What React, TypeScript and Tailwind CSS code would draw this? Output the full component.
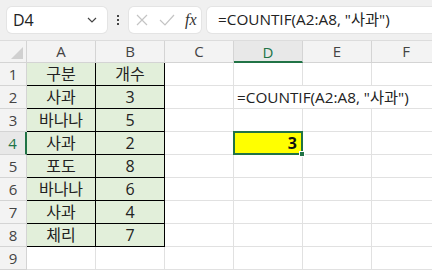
import React from "react";

const font = { fontFamily: '"Open Sans", "Noto Sans CJK KR", sans-serif' };

const cols = ["A", "B", "C", "D", "E", "F"];
const table: [string, string][] = [
  ["구분", "개수"],
  ["사과", "3"],
  ["바나나", "5"],
  ["사과", "2"],
  ["포도", "8"],
  ["바나나", "6"],
  ["사과", "4"],
  ["체리", "7"],
];

function Chevron() {
  return (
    <svg width="12" height="8" viewBox="0 0 12 8" className="text-[#444]">
      <path d="M2 2 L6 6 L10 2" fill="none" stroke="currentColor" strokeWidth="1.2" />
    </svg>
  );
}

function FormulaBar() {
  return (
    <div className="flex h-[41px] items-center gap-0 border-b border-[#dcdcdc] bg-[#f0f0f0]">
      <div className="ml-[7px] flex h-[26px] w-[100px] items-center justify-between rounded-[5px] bg-white pl-[6px] pr-[9px] shadow-[0_0_0_1px_#e4e4e4]">
        <span className="text-[16px] leading-none text-[#222]">D4</span>
        <Chevron />
      </div>
      <div className="flex w-[22px] flex-col items-center gap-[2px]">
        <span className="h-[2px] w-[2px] bg-[#444]" />
        <span className="h-[2px] w-[2px] bg-[#444]" />
        <span className="h-[2px] w-[2px] bg-[#444]" />
      </div>
      <div className="flex h-[26px] w-[72px] items-center rounded-[5px] bg-white pl-[6px] shadow-[0_0_0_1px_#e4e4e4]">
        <svg width="14" height="14" viewBox="0 0 14 14">
          <path d="M2 2 L12 12 M12 2 L2 12" stroke="#c4c4c4" strokeWidth="1.2" />
        </svg>
        <svg width="16" height="14" viewBox="0 0 16 14" className="ml-[10px]">
          <path d="M1 7 L6 12 L15 2" fill="none" stroke="#c4c4c4" strokeWidth="1.2" />
        </svg>
        <span
          className="ml-[10px] text-[16px] italic leading-none text-[#333]"
          style={{ fontFamily: '"Liberation Serif", serif' }}
        >
          fx
        </span>
      </div>
      <div className="ml-[6px] flex h-[26px] flex-1 items-center rounded-l-[5px] bg-white pl-[11px] shadow-[0_0_0_1px_#e4e4e4]">
        <span className="whitespace-nowrap text-[15.3px] leading-none text-[#222]">
          =COUNTIF(A2:A8, "사과")
        </span>
      </div>
    </div>
  );
}

export default function App() {
  return (
    <div className="h-[271px] w-[432px] overflow-hidden bg-white" style={font}>
      <FormulaBar />
      <div className="grid grid-cols-[27px_repeat(6,69px)] grid-rows-[22px_repeat(9,23px)]">
        {/* select-all corner */}
        <div className="relative border-b border-r border-[#d4d4d4] bg-[#f3f3f3]">
          <svg width="12" height="12" viewBox="0 0 12 12" className="absolute bottom-[3px] right-[3px]">
            <path d="M12 0 L12 12 L0 12 Z" fill="#d0d0d0" />
          </svg>
        </div>
        {cols.map((c) => (
          <div
            key={c}
            className={
              c === "D"
                ? "flex items-center justify-center border-b-2 border-r border-b-[#217346] border-r-[#d4d4d4] bg-[#e8e8e8] pt-[2px] text-[15px] text-[#217346]"
                : "flex items-center justify-center border-b border-r border-[#d4d4d4] bg-[#f3f3f3] text-[15px] text-[#444]"
            }
          >
            {c}
          </div>
        ))}
        {Array.from({ length: 9 }, (_, r) => {
          const row = r + 1;
          const data = table[r];
          return (
            <React.Fragment key={row}>
              <div
                className={
                  row === 4
                    ? "flex items-center justify-center border-b border-r-2 border-b-[#d4d4d4] border-r-[#217346] bg-[#e8e8e8] text-[15px] text-[#217346]"
                    : "flex items-center justify-center border-b border-r border-[#d4d4d4] bg-[#f3f3f3] text-[15px] text-[#444]"
                }
              >
                {row}
              </div>
              {data ? (
                <>
                  <div className="flex items-center justify-center border-b border-r border-black bg-[#e2efda] text-[16px] text-[#222]">
                    {data[0]}
                  </div>
                  <div className="flex items-center justify-center border-b border-r border-black bg-[#e2efda] text-[16px] text-[#222]">
                    {data[1]}
                  </div>
                </>
              ) : (
                <>
                  <div className="border-b border-r border-[#e1e1e1]" />
                  <div className="border-b border-r border-[#e1e1e1]" />
                </>
              )}
              <div className="border-b border-r border-[#e1e1e1]" />
              {row === 2 ? (
                <div className="col-span-3 flex items-center border-b border-[#e1e1e1] pl-[3px] text-[15.3px] text-[#222] whitespace-nowrap">
                  =COUNTIF(A2:A8, "사과")
                </div>
              ) : row === 4 ? (
                <>
                  <div className="relative flex items-center justify-end border-b border-r border-[#e1e1e1] bg-[#ffff00] pr-[5px] text-[16px] font-bold text-[#111]">
                    3
                    <div className="absolute -left-[1px] -top-[1px] bottom-[-1px] right-[-1px] border-2 border-[#217346]" />
                    <div className="absolute -bottom-[3px] -right-[3px] h-[6px] w-[6px] border border-white bg-[#217346]" />
                  </div>
                  <div className="border-b border-r border-[#e1e1e1]" />
                  <div className="border-b border-r border-[#e1e1e1]" />
                </>
              ) : (
                <>
                  <div className="border-b border-r border-[#e1e1e1]" />
                  <div className="border-b border-r border-[#e1e1e1]" />
                  <div className="border-b border-r border-[#e1e1e1]" />
                </>
              )}
            </React.Fragment>
          );
        })}
      </div>
    </div>
  );
}
